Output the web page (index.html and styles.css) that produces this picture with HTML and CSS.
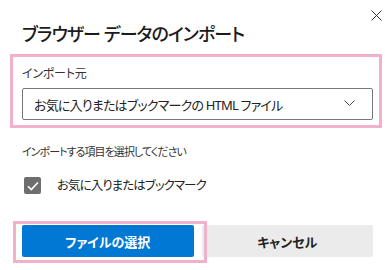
FILE: index.html
```html
<!DOCTYPE html>
<html lang="ja">
<head>
<meta charset="utf-8">
<link rel="stylesheet" href="styles.css">
</head>
<body>
<div class="dialog">
  <div class="header">
    <h1 class="title">ブラウザー データのインポート</h1>
    <svg class="close" width="11" height="11" viewBox="0 0 11 11"><path d="M0.5 0.5 L10.5 10.5 M10.5 0.5 L0.5 10.5" stroke="#333" stroke-width="1" fill="none"/></svg>
  </div>
  <div class="source">
    <div class="label">インポート元</div>
    <div class="select">
      <span class="select-text">お気に入りまたはブックマークの HTML ファイル</span>
      <svg class="chevron" width="11" height="6" viewBox="0 0 11 6"><path d="M0.5 0.5 L5.5 5.5 L10.5 0.5" stroke="#444" stroke-width="1" fill="none"/></svg>
    </div>
  </div>
  <div class="label items-label">インポートする項目を選択してください</div>
  <div class="check-row">
    <span class="checkbox"><svg width="12" height="10" viewBox="0 0 12 10"><path d="M1 5.2 L4.3 8.5 L11 1.5" stroke="#fff" stroke-width="1.6" fill="none"/></svg></span>
    <span class="check-text">お気に入りまたはブックマーク</span>
  </div>
  <div class="buttons">
    <button class="btn primary">ファイルの選択</button>
    <button class="btn secondary">キャンセル</button>
  </div>
</div>
<div class="highlight hl-source"></div>
<div class="highlight hl-button"></div>
</body>
</html>
```
FILE: styles.css
```css
html, body {
  margin: 0;
  padding: 0;
  background: #fff;
}
body {
  width: 385px;
  height: 270px;
  overflow: hidden;
  position: relative;
  font-family: "Noto Sans", "Noto Sans CJK JP", sans-serif;
  font-feature-settings: "palt";
  color: #1b1b1b;
}
.dialog {
  padding: 10px 12px 0 22px;
  display: flex;
  flex-direction: column;
}
.header {
  display: flex;
  justify-content: space-between;
  align-items: flex-start;
  height: 44px;
}
.title {
  margin: 10px 0 0 0;
  font-size: 18px;
  font-weight: 500;
  line-height: 28px;
  letter-spacing: -0.9px;
  color: #1b1b1b;
}
.close {
  margin-right: -9px;
  display: block;
}
.source {
  display: flex;
  flex-direction: column;
}
.label {
  font-size: 12px;
  line-height: 16px;
  color: #333;
  letter-spacing: -0.2px;
}
.source .label {
  margin-top: 12px;
}
.select {
  margin-top: 6px;
  height: 32px;
  box-sizing: border-box;
  border: 1.5px solid #777;
  border-radius: 2px;
  display: flex;
  align-items: center;
  justify-content: space-between;
  padding: 0 17px 0 11px;
}
.select-text {
  font-size: 13px;
  letter-spacing: -0.8px;
  color: #222;
}
.chevron {
  display: block;
  margin-top: -2px;
}
.items-label {
  margin-top: 24px;
  font-size: 11px;
  letter-spacing: -0.95px;
}
.check-row {
  margin-top: 17px;
  margin-left: 2px;
  display: flex;
  align-items: center;
  gap: 16px;
}
.checkbox {
  width: 17px;
  height: 17px;
  background: #6e6e6e;
  border-radius: 2px;
  display: flex;
  align-items: center;
  justify-content: center;
}
.check-text {
  font-size: 12.5px;
  line-height: 17px;
  letter-spacing: -0.95px;
  color: #222;
}
.buttons {
  margin-top: 31px;
  display: flex;
  gap: 8px;
}
.btn {
  flex: 1;
  height: 32px;
  border: none;
  border-radius: 2px;
  font-family: inherit;
  font-feature-settings: "palt";
  font-size: 13px;
  font-weight: 700;
  padding: 0;
}
.primary {
  background: #0078d4;
  color: #fff;
}
.secondary {
  background: #ebebeb;
  color: #222;
}
.highlight {
  position: absolute;
  box-sizing: border-box;
  border: 3px solid #f2b1ca;
}
.hl-source {
  left: 10px;
  top: 54px;
  width: 372px;
  height: 74px;
}
.hl-button {
  left: 13px;
  top: 221px;
  width: 194px;
  height: 42px;
}
```
